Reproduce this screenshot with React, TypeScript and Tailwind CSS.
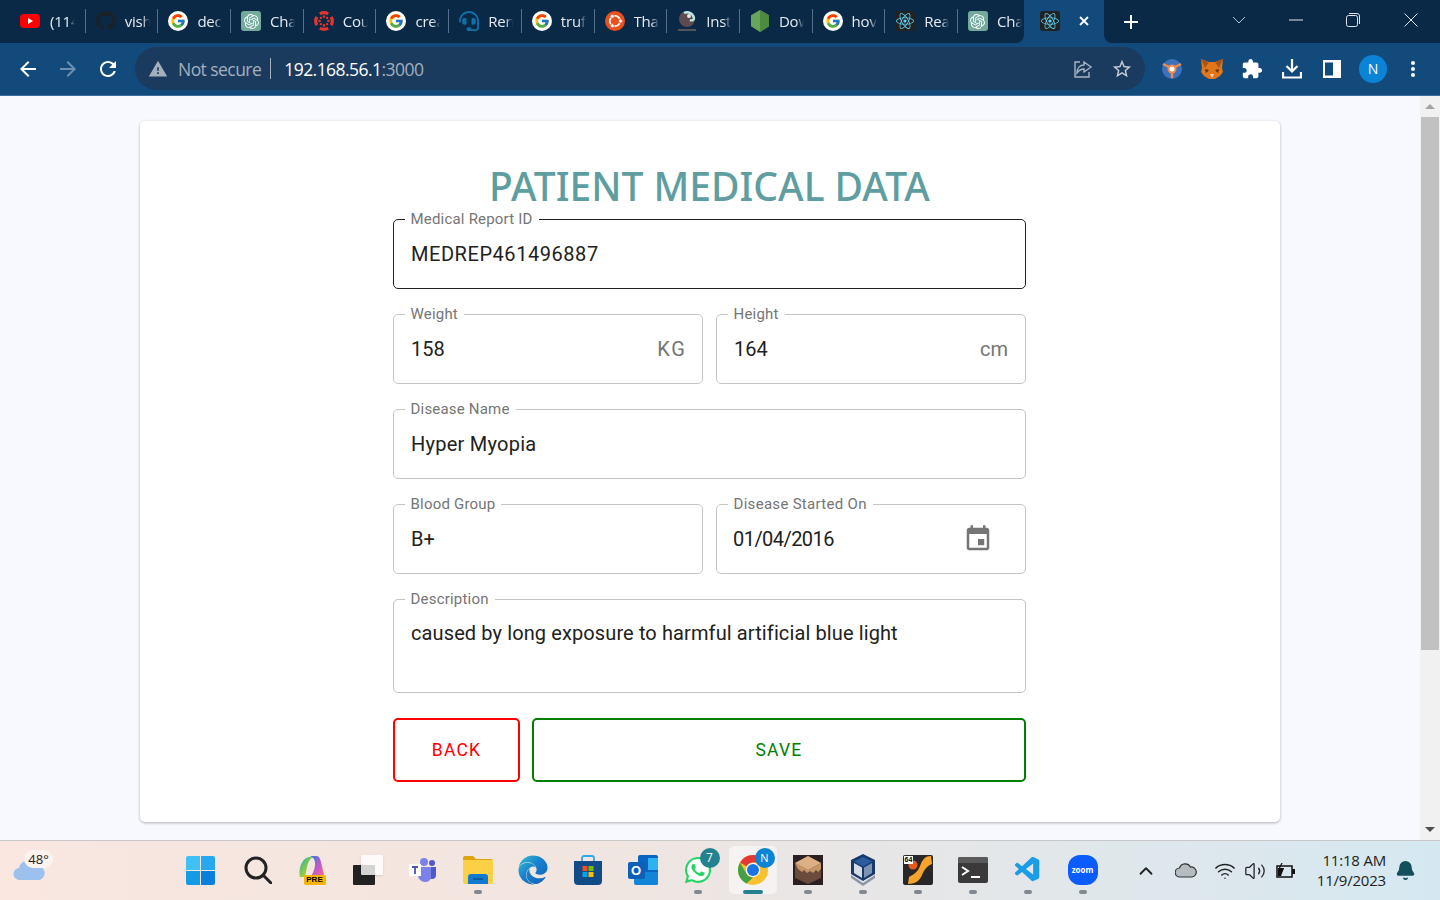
import React from "react";
import { FcGoogle } from "react-icons/fc";
import { FaGithub, FaReact, FaWhatsapp, FaEdge, FaHeadset } from "react-icons/fa";
import { SiOpenai } from "react-icons/si";
import { VscVscode } from "react-icons/vsc";
import { ChevronUp, Wifi, Volume2, Bell } from "lucide-react";

const GoogleIcon = () => (
  <span className="w-[20px] h-[20px] rounded-full bg-white flex items-center justify-center"><FcGoogle size={16} /></span>
);
const GptIcon = () => (
  <span className="w-[20px] h-[20px] rounded-[3px] bg-[#74aa9c] flex items-center justify-center text-white"><SiOpenai size={15} /></span>
);
const ReactIcon = () => (
  <span className="w-[20px] h-[20px] rounded-[3px] bg-[#222222] flex items-center justify-center text-[#5ed3f3]"><FaReact size={18} /></span>
);
const YouTubeIcon = () => (
  <svg width="20" height="14" viewBox="0 0 20 14"><rect width="20" height="14" rx="4" fill="#f00" /><path d="M8 4l5 3-5 3z" fill="#fff" /></svg>
);
const CanvasIcon = () => (
  <svg width="20" height="20" viewBox="0 0 20 20" fill="#e0362c">
    <path d="M5 1.500a10 10 0 0 1 10 0l-1.700 2.800a6.600 6.600 0 0 0-6.600 0z" />
    <path d="M18.500 5a10 10 0 0 1 0 10l-2.800-1.700a6.600 6.600 0 0 0 0-6.600z" />
    <path d="M15 18.500a10 10 0 0 1-10 0l1.700-2.800a6.600 6.600 0 0 0 6.600 0z" />
    <path d="M1.500 15a10 10 0 0 1 0-10l2.800 1.700a6.600 6.600 0 0 0 0 6.600z" />
    <circle cx="10" cy="5.600" r="1.300" /><circle cx="10" cy="14.400" r="1.300" /><circle cx="5.600" cy="10" r="1.300" /><circle cx="14.400" cy="10" r="1.300" />
    <circle cx="6.900" cy="6.900" r="1.200" /><circle cx="13.100" cy="6.900" r="1.200" /><circle cx="6.900" cy="13.100" r="1.200" /><circle cx="13.100" cy="13.100" r="1.200" />
  </svg>
);
const UbuntuIcon = () => (
  <svg width="20" height="20" viewBox="0 0 20 20">
    <circle cx="10" cy="10" r="10" fill="#e8501e" />
    <circle cx="10" cy="10" r="5.200" fill="none" stroke="#fff" strokeWidth="1.800" />
    <circle cx="15.500" cy="10" r="2" fill="#fff" stroke="#e8501e" strokeWidth="0.800" />
    <circle cx="7.250" cy="5.200" r="2" fill="#fff" stroke="#e8501e" strokeWidth="0.800" />
    <circle cx="7.250" cy="14.800" r="2" fill="#fff" stroke="#e8501e" strokeWidth="0.800" />
  </svg>
);
const TruffleIcon = () => (
  <svg width="20" height="22" viewBox="0 0 20 22">
    <circle cx="10" cy="9" r="8" fill="#5e4b4f" />
    <path d="M7 3a7 7 0 0 1 10 5c0 2-2 3-4 2" fill="none" stroke="#b7ebe6" strokeWidth="2.400" />
    <circle cx="12" cy="6" r="2" fill="#efe6e6" />
    <rect x="1" y="19" width="18" height="2" fill="#555" />
  </svg>
);
const NodeIcon = () => (
  <svg width="20" height="22" viewBox="0 0 20 22"><path d="M10 0l9 5.200v11L10 22l-9-5.800v-11z" fill="#68a55a" /><path d="M10 0l9 5.200v11L10 22z" fill="#4d8c40" /></svg>
);

const tabs: [React.ReactNode, string][] = [
  [<YouTubeIcon />, "(114"],
  [<span className="text-[#1c2126] flex"><FaGithub size={20} /></span>, "vish"],
  [<GoogleIcon />, "dec"],
  [<GptIcon />, "Cha"],
  [<CanvasIcon />, "Cou"],
  [<GoogleIcon />, "crea"],
  [<span className="text-[#0f6fa6] flex"><FaHeadset size={20} /></span>, "Ren"],
  [<GoogleIcon />, "truf"],
  [<UbuntuIcon />, "Tha"],
  [<TruffleIcon />, "Inst"],
  [<NodeIcon />, "Dow"],
  [<GoogleIcon />, "hov"],
  [<ReactIcon />, "Rea"],
  [<GptIcon />, "Cha"],
];

function Tab({ icon, text, pos }: { icon: React.ReactNode; text: string; pos: number }) {
  const first = pos === 0;
  const last = pos === tabs.length - 1;
  return (
    <div className={`h-[24px] flex items-center shrink-0 ${first ? "w-[72.700px] pl-[7px] border-r border-[#54708c]" : last ? "w-[64px] pl-[10px]" : "w-[72.700px] pl-[10px] border-r border-[#54708c]"}`}>
      <span className="w-[20px] h-[22px] flex items-center justify-center shrink-0">{icon}</span>
      <span className={`${first ? "ml-[10px]" : "ml-[9px]"} w-[25px] overflow-hidden whitespace-nowrap text-[15px] tracking-[-0.2px] text-[#e6ebf0] [mask-image:linear-gradient(to_right,black_70%,transparent)]`}>{text}</span>
    </div>
  );
}

function TabBar() {
  return (
    <div className="h-[43px] flex bg-[#134a7c]">
      <div className="w-[1024px] h-full bg-[#0a2946] rounded-br-[8px] flex items-center pl-[13px] pb-[1px]">
        {tabs.map(([icon, text], i) => <Tab key={i} icon={icon} text={text} pos={i} />)}
      </div>
      <div className="w-[80px] h-full rounded-t-[8px] flex items-center pl-[16px] pb-[1px]">
        <ReactIcon />
        <svg className="ml-[18px]" width="12" height="12" viewBox="0 0 12 12"><path d="M2 2l8 8M10 2l-8 8" stroke="#fff" strokeWidth="1.800" /></svg>
      </div>
      <div className="flex-1 h-full bg-[#0a2946] rounded-bl-[8px] flex items-center">
        <svg className="ml-[19px]" width="16" height="16" viewBox="0 0 16 16"><path d="M8 1v14M1 8h14" stroke="#fff" strokeWidth="2" /></svg>
        <svg className="ml-[93px] mb-[4px]" width="14" height="8" viewBox="0 0 14 8"><path d="M1 1l6 6 6-6" fill="none" stroke="#b8c4d0" strokeWidth="1" /></svg>
        <svg className="ml-[43px] mb-[4px]" width="14" height="2" viewBox="0 0 14 2"><path d="M0 1h14" stroke="#e0e6ec" strokeWidth="1" /></svg>
        <svg className="ml-[43px] mb-[4px]" width="14" height="14" viewBox="0 0 14 14"><rect x="0.500" y="2.500" width="11" height="11" rx="2" fill="none" stroke="#e0e6ec" /><path d="M3 .5h8a2.500 2.500 0 0 1 2.500 2.500v8" fill="none" stroke="#e0e6ec" /></svg>
        <svg className="ml-[44px] mb-[4px]" width="14" height="14" viewBox="0 0 14 14"><path d="M.5.5l13 13M13.500.5l-13 13" stroke="#e0e6ec" strokeWidth="1" /></svg>
      </div>
    </div>
  );
}

const MI = ({ d, size = 24, cls = "" }: { d: string; size?: number; cls?: string }) => (
  <svg width={size} height={size} viewBox="0 0 24 24" fill="currentColor" className={cls}><path d={d} /></svg>
);

const TB = ({ children }: { children: React.ReactNode }) => (
  <div className="w-[40px] h-[40px] flex items-center justify-center shrink-0">{children}</div>
);

function Toolbar() {
  return (
    <div className="h-[53px] bg-[#134a7c] border-b border-[#3d6d9b] flex items-center pl-[8px] pb-[1px]">
      <TB><span className="text-white"><MI d="M20 11H7.830l5.590-5.590L12 4l-8 8 8 8 1.410-1.410L7.830 13H20v-2z" /></span></TB>
      <TB><span className="text-[#6f8fae]"><MI d="M12 4l-1.410 1.410L16.170 11H4v2h12.170l-5.580 5.590L12 20l8-8z" /></span></TB>
      <TB><span className="text-white"><MI d="M17.650 6.350C16.200 4.900 14.210 4 12 4c-4.420 0-7.990 3.580-7.990 8s3.570 8 7.990 8c3.730 0 6.840-2.550 7.730-6h-2.080c-.82 2.330-3.040 4-5.650 4-3.310 0-6-2.690-6-6s2.690-6 6-6c1.660 0 3.140.69 4.220 1.780L13 11h7V4l-2.350 2.350z" /></span></TB>
      <div className="ml-[7px] w-[1010px] h-[43px] rounded-full bg-[#1a3a5e] flex items-center pl-[13px] font-['Open_Sans','Noto_Sans',sans-serif] text-[17.500px] tracking-[-0.550px] shrink-0">
        <span className="text-[#a3afbc]"><MI d="M1 21h22L12 2 1 21zm12-3h-2v-2h2v2zm0-4h-2v-4h2v4z" size={20} /></span>
        <span className="ml-[10px] pt-[1px] text-[#a3afbc]">Not secure</span>
        <span className="ml-[9px] w-px h-[21px] bg-[#a3afbc]" />
        <span className="ml-[13px] pt-[1px] text-white">192.168.56.1<span className="text-[#a3afbc]">:3000</span></span>
        <span className="ml-auto flex items-center">
          <svg width="20" height="20" viewBox="0 0 20 20" fill="none" stroke="#aab6c2" strokeWidth="1.400"><path d="M7 3H2v15h14v-5" /><path d="M11 3l7 5-7 5v-3c-3 0-5 1-7 4 0-5 3-8 7-8z" /></svg>
          <span className="ml-[18px] mr-[12px] text-[#c5ced7]"><MI d="M22 9.240l-7.190-.62L12 2 9.190 8.630 2 9.240l5.460 4.730L5.820 21 12 17.270 18.180 21l-1.630-7.030L22 9.240zM12 15.400l-3.760 2.270 1-4.280-3.320-2.880 4.380-.38L12 6.100l1.710 4.040 4.380.38-3.320 2.880 1 4.280L12 15.400z" size={22} /></span>
        </span>
      </div>
      <div className="ml-[7px] flex items-center text-white">
        <TB>
          <svg width="20" height="20" viewBox="0 0 20 20"><circle cx="10" cy="10" r="10" fill="#3c72bd" /><path d="M1 5l6 3M19 5l-6 3M10 14v5" stroke="#f08a4b" strokeWidth="2.500" /><circle cx="10" cy="10" r="4.500" fill="#f08a4b" /><circle cx="10" cy="10" r="2.500" fill="#fff" /></svg>
        </TB>
        <TB>
          <svg width="22" height="20" viewBox="0 0 22 20"><path d="M0 0l8 3h6l8-3-1 9 1 4-3 4-5 3H8l-5-3-3-4 1-4z" fill="#e2761b" /><path d="M4 10l4 1-3 3zM18 10l-4 1 3 3z" fill="#5e3310" /><path d="M9 15h4l-2 4z" fill="#f0d5be" /><path d="M0 0l8 3-4 6zM22 0l-8 3 4 6z" fill="#a8551a" /></svg>
        </TB>
        <TB><MI d="M20.500 11H19V7c0-1.100-.9-2-2-2h-4V3.500C13 2.120 11.880 1 10.500 1S8 2.120 8 3.500V5H4c-1.100 0-1.990.9-1.990 2v3.800H3.500c1.490 0 2.700 1.210 2.700 2.700s-1.210 2.700-2.700 2.700H2V20c0 1.100.9 2 2 2h3.800v-1.500c0-1.490 1.210-2.700 2.700-2.700 1.490 0 2.700 1.210 2.700 2.700V22H17c1.100 0 2-.9 2-2v-4h1.500c1.380 0 2.500-1.120 2.500-2.500S21.880 11 20.500 11z" size={22} /></TB>
        <TB>
          <svg width="20" height="20" viewBox="0 0 20 20" fill="none" stroke="#fff" strokeWidth="2.200"><path d="M10 0v12M4.500 7l5.500 5.500L15.500 7" /><path d="M1 13v5.500h18V13" /></svg>
        </TB>
        <TB>
          <svg width="18" height="18" viewBox="0 0 18 18"><rect width="18" height="18" fill="#fff" /><rect x="2" y="2.500" width="8" height="13" fill="#134a7c" /></svg>
        </TB>
        <div className="flex ml-[1px]">
          <TB><span className="w-[28px] h-[28px] rounded-full bg-[#0b84d6] flex items-center justify-center text-[14px] font-['Open_Sans',sans-serif]">N</span></TB>
          <TB><svg width="4" height="16" viewBox="0 0 4 16" fill="#fff"><circle cx="2" cy="2" r="2" /><circle cx="2" cy="8" r="2" /><circle cx="2" cy="14" r="2" /></svg></TB>
        </div>
      </div>
    </div>
  );
}

function Field({ label, focus, h = "h-[70px]", lt = "tracking-[0.2px]", children }: { label: string; focus?: boolean; h?: string; lt?: string; children: React.ReactNode }) {
  return (
    <div className={`relative rounded-[5px] border ${focus ? "border-[#212121]" : "border-[#c4c4c4]"} ${h} flex px-[17px] text-[20px] text-[#212121]`}>
      <span className={`absolute -top-[10px] left-[10.500px] px-[6px] bg-white text-[15px] leading-[18px] text-[#757575] ${lt}`}>{label}</span>
      {children}
    </div>
  );
}

function Form() {
  return (
    <div className="w-[633px] self-start ml-[253px] flex flex-col gap-[25px] font-['Roboto',sans-serif]">
      <Field label="Medical Report ID" focus><span className="self-center tracking-[0.55px]">MEDREP461496887</span></Field>
      <div className="grid grid-cols-2 gap-[13px]">
        <Field label="Weight"><span className="self-center">158</span><span className="self-center ml-auto text-[#757575] tracking-[2px] -mr-[2px]">KG</span></Field>
        <Field label="Height"><span className="self-center">164</span><span className="self-center ml-auto text-[#757575]">cm</span></Field>
      </div>
      <Field label="Disease Name"><span className="self-center tracking-[0.25px]">Hyper Myopia</span></Field>
      <div className="grid grid-cols-2 gap-[13px]">
        <Field label="Blood Group"><span className="self-center">B+</span></Field>
        <Field label="Disease Started On" lt="tracking-[0.3px]">
          <span className="self-center tracking-[-0.55px] -ml-[1px]">01/04/2016</span>
          <span className="self-center ml-auto mr-[15px] text-[#757575]"><MI d="M17 12h-5v5h5v-5zM16 1v2H8V1H6v2H5c-1.110 0-1.990.9-1.990 2L3 19c0 1.100.89 2 2 2h14c1.100 0 2-.9 2-2V5c0-1.100-.9-2-2-2h-1V1h-2zm3 18H5V8h14v11z" size={30} /></span>
        </Field>
      </div>
      <Field label="Description" h="h-[94px] pt-[18px]"><span className="tracking-[0.11px]">caused by long exposure to harmful artificial blue light</span></Field>
      <div className="flex gap-[12px]">
        <button className="w-[127px] h-[64px] rounded-[5px] border-2 border-[#ff0000] text-[#ff0000] text-[17.500px] tracking-[1.200px]">BACK</button>
        <button className="flex-1 h-[64px] rounded-[5px] border-2 border-[#008000] text-[#008000] text-[17.500px] tracking-[1.200px]">SAVE</button>
      </div>
    </div>
  );
}

function Page() {
  return (
    <div className="flex-1 flex bg-[#f8f9ff] overflow-hidden">
      <div className="w-[1420px] px-[140px] pt-[25px]">
        <div className="h-[701px] bg-white rounded-[5px] shadow-[0_1px_3px_rgba(0,0,0,0.3)] flex flex-col items-center pt-[41px]">
          <h1 className="font-['Noto_Sans',sans-serif] text-[39px] leading-[48px] font-medium text-[#5f9ea0] mb-[9px] -ml-[1px]">PATIENT MEDICAL DATA</h1>
          <Form />
        </div>
      </div>
      <div className="w-[20px] bg-[#f1f1f1] flex flex-col items-center">
        <div className="h-[21px] flex items-center justify-center"><span className="border-x-[5px] border-x-transparent border-b-[5px] border-b-[#a3a3a3]" /></div>
        <div className="w-[18px] h-[533px] bg-[#c1c1c1]" />
        <div className="flex-1" />
        <div className="h-[21px] flex items-center justify-center"><span className="border-x-[5px] border-x-transparent border-t-[5px] border-t-[#505050]" /></div>
      </div>
    </div>
  );
}

const WinIcon = () => (
  <div className="grid grid-cols-2 gap-[1px] w-[29px] h-[29px] -ml-[5px]">
    <span className="bg-[#3fc1f5] rounded-tl-[2px]" /><span className="bg-[#28a8ee] rounded-tr-[2px]" />
    <span className="bg-[#149be6] rounded-bl-[2px]" /><span className="bg-[#0a7fdb] rounded-br-[2px]" />
  </div>
);
const SearchIcon = () => (
  <svg width="28" height="28" viewBox="0 0 28 28" fill="none" stroke="#222" strokeWidth="3"><circle cx="12" cy="12" r="10" /><path d="M19 19l8 8" strokeLinecap="round" /></svg>
);
const CopilotIcon = () => (
  <div className="relative w-[30px] h-[30px]">
    <svg width="28" height="24" viewBox="0 0 28 24">
      <defs><linearGradient id="cpa" x1="0" y1="0" x2="1" y2="1"><stop offset="0" stopColor="#1fb6ae" /><stop offset="0.600" stopColor="#9ccc3c" /><stop offset="1" stopColor="#f6c23e" /></linearGradient>
      <linearGradient id="cpb" x1="0" y1="0" x2="1" y2="1"><stop offset="0" stopColor="#2a7de1" /><stop offset="0.600" stopColor="#c55ac8" /><stop offset="1" stopColor="#f36a8d" /></linearGradient></defs>
      <path d="M2 22C0 12 5 2 12 2h4C9 4 9 14 7 22z" fill="url(#cpa)" />
      <path d="M12 1h6c3 0 4 2 5 6l3 13H14C17 14 20 4 12 1z" fill="url(#cpb)" />
    </svg>
    <span className="absolute left-[6px] bottom-0 w-[22px] h-[10px] bg-[#f7b500] rounded-[2px] text-[8px] leading-[10px] font-bold text-black text-center font-['Liberation_Sans',sans-serif]">PRE</span>
  </div>
);
const TaskView = () => (
  <div className="relative w-[30px] h-[30px]">
    <span className="absolute left-0 bottom-0 w-[22px] h-[20px] bg-[#222] rounded-[1px]" />
    <span className="absolute right-0 top-0 w-[22px] h-[20px] bg-white/80 shadow-sm rounded-[1px]" />
  </div>
);
const TeamsIcon = () => (
  <svg width="28" height="24" viewBox="0 0 28 24">
    <circle cx="15" cy="4" r="4" fill="#7b83eb" /><circle cx="23" cy="5" r="3" fill="#5059c9" />
    <path d="M19 9h8v8a4 4 0 0 1-8 0z" fill="#5059c9" /><path d="M9 9h13v10a5 5 0 0 1-5 5h-1a7 7 0 0 1-7-7z" fill="#7b83eb" />
    <rect x="0" y="6" width="12" height="12" fill="#fff" /><path d="M3 9h6M6 9v7" stroke="#4b53bc" strokeWidth="1.800" />
  </svg>
);
const FolderIcon = () => (
  <svg width="30" height="28" viewBox="0 0 30 28"><path d="M0 2a2 2 0 0 1 2-2h8l3 3h15a2 2 0 0 1 2 2v3H0z" fill="#e0a50e" /><path d="M0 4h30v22a2 2 0 0 1-2 2H2a2 2 0 0 1-2-2z" fill="#fcd045" /><path d="M5 28v-7a3 3 0 0 1 3-3h14a3 3 0 0 1 3 3v7z" fill="#0f7bce" /><path d="M10 23h10" stroke="#0b4f91" strokeWidth="1.500" /></svg>
);
const EdgeIcon = () => (
  <>
    <svg width="0" height="0" className="absolute"><defs><linearGradient id="edg" x1="0" y1="0" x2="1" y2="1"><stop offset="0" stopColor="#38c4cc" /><stop offset="0.450" stopColor="#1681cf" /><stop offset="1" stopColor="#0f5fb5" /></linearGradient></defs></svg>
    <FaEdge size={30} className="fill-[url(#edg)]" />
  </>
);
const StoreIcon = () => (
  <svg width="30" height="30" viewBox="0 0 30 30"><path d="M9 6V3a2 2 0 0 1 2-2h8a2 2 0 0 1 2 2v3" fill="none" stroke="#2ea8e6" strokeWidth="1.800" /><path d="M1 6h28v20a4 4 0 0 1-4 4H5a4 4 0 0 1-4-4z" fill="#114b88" /><rect x="9.500" y="11" width="5" height="5" fill="#f25022" /><rect x="15.500" y="11" width="5" height="5" fill="#7fba00" /><rect x="9.500" y="17" width="5" height="5" fill="#00a4ef" /><rect x="15.500" y="17" width="5" height="5" fill="#ffb900" /></svg>
);
const OutlookIcon = () => (
  <div className="relative w-[30px] h-[30px]">
    <div className="absolute right-0 top-0 w-[20px] h-[30px] rounded-[2px] bg-[#0a64c2]" />
    <div className="absolute right-0 top-[3px] w-[10px] h-[12px] bg-[#2cb2ee]" />
    <div className="absolute right-0 bottom-0 w-[24px] h-[13px] bg-[#1285d8] rounded-b-[2px]" />
    <div className="absolute left-0 top-[7px] w-[17px] h-[17px] bg-[#0d5fb8] rounded-[2px] text-white text-[13px] leading-[17px] font-bold text-center font-['Liberation_Sans',sans-serif]">O</div>
  </div>
);
const WhatsappIcon = () => (
  <div className="relative w-[30px] h-[30px] rounded-full">
    <span className="absolute inset-[2px] rounded-full bg-white" />
    <span className="absolute inset-0 text-[#25d366]"><FaWhatsapp size={30} /></span>
    <span className="absolute -top-[7px] -right-[7px] w-[20px] h-[20px] rounded-full bg-[#23828f] text-white text-[12px] leading-[20px] text-center font-['Open_Sans',sans-serif]">7</span>
  </div>
);
const ChromeIcon = () => (
  <div className="relative w-[30px] h-[30px]">
    <svg width="30" height="30" viewBox="0 0 30 30">
      <circle cx="15" cy="15" r="15" fill="#fbc02d" />
      <path d="M15 0a15 15 0 0 1 13 7.500H15a7.500 7.500 0 0 0-6.500 3.750L2 7.500A15 15 0 0 1 15 0z" fill="#e53935" />
      <path d="M2 7.500l6.500 11.250A7.500 7.500 0 0 0 15 22.500L8.500 28.500A15 15 0 0 1 2 7.500z" fill="#43a047" />
      <circle cx="15" cy="15" r="7.200" fill="#fff" /><circle cx="15" cy="15" r="6" fill="#1a73e8" />
    </svg>
    <span className="absolute -top-[7px] -right-[7px] w-[20px] h-[20px] rounded-full bg-[#0b84d6] text-white text-[11px] leading-[20px] text-center font-['Open_Sans',sans-serif]">N</span>
  </div>
);
const CubeApp = () => (
  <svg width="30" height="30" viewBox="0 0 30 30"><rect width="30" height="30" fill="#2c1f22" /><path d="M15 1l13 7v15l-13 6-13-6V8z" fill="#6a4b3c" /><path d="M15 1l13 7-13 7-13-7z" fill="#dcb083" /><path d="M2 8l13 7 13-7v6l-3 3-2-2-3 3-3-2-3 2-3-3-2 2-4-3z" fill="#c59468" /></svg>
);
const VBoxIcon = () => (
  <svg width="26" height="32" viewBox="0 0 26 32"><path d="M13 0l12 6v14l-12 7-12-7V6z" fill="#183a6b" /><path d="M13 3l9 4.500-9 5-9-5z" fill="#2b5c9f" /><path d="M4 9l8 4.500V24l-8-5z" fill="#d5dce6" /><path d="M22 9l-8 4.500V24l8-5z" fill="#7d93b4" /><path d="M1 21l12 8 12-8v3l-12 8-12-8z" fill="#8b97a8" /></svg>
);
const XIcon = () => (
  <div className="relative w-[30px] h-[30px] bg-[#2a2728] rounded-[2px] overflow-hidden">
    <svg width="30" height="30" viewBox="0 0 30 30"><path d="M28 1c-7 0-9 5-11 10s-5 8-11 11l-1 7c8 0 12-4 14-9s5-9 10-11z" fill="#f5a52b" /><circle cx="10" cy="10" r="4.500" fill="#e85a1a" /></svg>
    <span className="absolute left-[1px] top-[1px] px-[1px] bg-white text-[7px] leading-[8px] font-bold text-black font-['Liberation_Sans',sans-serif]">64</span>
  </div>
);
const TermIcon = () => (
  <svg width="30" height="26" viewBox="0 0 30 26"><rect width="30" height="26" rx="2" fill="#3a3a3a" /><path d="M0 2a2 2 0 0 1 2-2h26a2 2 0 0 1 2 2v4H0z" fill="#5a5a5a" /><path d="M4 10l6 4-6 4" fill="none" stroke="#fff" strokeWidth="2" /><path d="M13 20h9" stroke="#fff" strokeWidth="2" /></svg>
);
const ZoomIcon = () => (
  <div className="w-[30px] h-[30px] rounded-[12px] bg-[#0b5cff] text-white text-[8px] leading-[30px] text-center font-bold font-['Open_Sans',sans-serif]">zoom</div>
);

const apps: [React.ReactNode, number][] = [
  [<WinIcon />, 0], [<SearchIcon />, 0], [<CopilotIcon />, 0], [<TaskView />, 0], [<TeamsIcon />, 0], [<FolderIcon />, 1],
  [<EdgeIcon />, 0], [<StoreIcon />, 0], [<OutlookIcon />, 0], [<WhatsappIcon />, 1], [<ChromeIcon />, 2], [<CubeApp />, 1],
  [<VBoxIcon />, 1], [<XIcon />, 1], [<TermIcon />, 1], [<span className="text-[#1a9ce8] flex"><VscVscode size={30} /></span>, 1], [<ZoomIcon />, 1],
];

function Taskbar() {
  return (
    <div className="h-[60px] border-t border-[#c8c8c8] bg-gradient-to-r from-[#f9e7e0] via-[#f3e5df] via-35% to-[#d5e8f1] flex shrink-0 font-['Open_Sans','Noto_Sans',sans-serif]">
      <div className="w-[175px] relative shrink-0">
        <svg className="absolute left-[13px] top-[17px]" width="32" height="22" viewBox="0 0 32 22"><path d="M7 22a6 6 0 0 1-1-12 9 9 0 0 1 17-2 7 7 0 0 1 3 14z" fill="#9cc1ee" /></svg>
        <span className="absolute left-[24px] top-[9px] w-[29px] h-[18px] rounded-full bg-[#fdf3ee] text-[13px] leading-[18px] text-center text-[#222]">48°</span>
      </div>
      {apps.map(([icon, state], i) => (
        <div key={i} className="relative w-[55px] h-full flex items-center justify-center shrink-0">
          {state === 2 && <span className="absolute left-[4px] top-[5px] w-[48px] h-[48px] rounded-[5px] bg-white/50" />}
          <span className="relative -mt-[1px] flex items-center justify-center">{icon}</span>
          {state === 1 && <span className="absolute bottom-[6px] left-[23.500px] w-[8px] h-[4px] rounded-full bg-[#808890]" />}
          {state === 2 && <span className="absolute bottom-[6px] left-[18px] w-[20px] h-[4px] rounded-full bg-[#23828f]" />}
        </div>
      ))}
      <div className="flex-1 flex items-center text-[#222]">
        <span className="ml-[25px] flex"><ChevronUp size={22} strokeWidth={2} /></span>
        <svg className="ml-[18px]" width="22" height="15" viewBox="0 0 22 15"><path d="M5 14a4.500 4.500 0 0 1-.5-9 6 6 0 0 1 11-1 5 5 0 0 1 1.500 10z" fill="#b5bcc0" stroke="#333" strokeWidth="1.200" /></svg>
        <span className="ml-[17px] flex"><Wifi size={22} strokeWidth={1.600} /></span>
        <span className="ml-[8px] flex"><Volume2 size={22} strokeWidth={1.400} /></span>
        <svg className="ml-[9px]" width="20" height="16" viewBox="0 0 20 16"><path d="M2 3h15v11H2z" fill="none" stroke="#111" strokeWidth="1.500" /><path d="M3 5h6l-3 8H3z" fill="#111" /><rect x="17" y="6" width="3" height="5" fill="#111" /><path d="M7 0L4 6h4l-3 5" stroke="#111" fill="none" strokeWidth="1.200" /></svg>
        <div className="ml-[11px] w-[80px] -mt-[1px] text-right text-[15px] leading-[20px] tracking-[-0.2px]">
          <div>11:18 AM</div>
          <div>11/9/2023</div>
        </div>
        <span className="ml-[9px] flex text-[#134f5c]"><Bell size={21} fill="currentColor" /></span>
      </div>
    </div>
  );
}

export default function App() {
  return (
    <div className="w-[1440px] h-[900px] flex flex-col overflow-hidden font-['Roboto',sans-serif]">
      <div className="font-['Open_Sans','Noto_Sans',sans-serif]"><TabBar /></div>
      <Toolbar />
      <Page />
      <Taskbar />
    </div>
  );
}
